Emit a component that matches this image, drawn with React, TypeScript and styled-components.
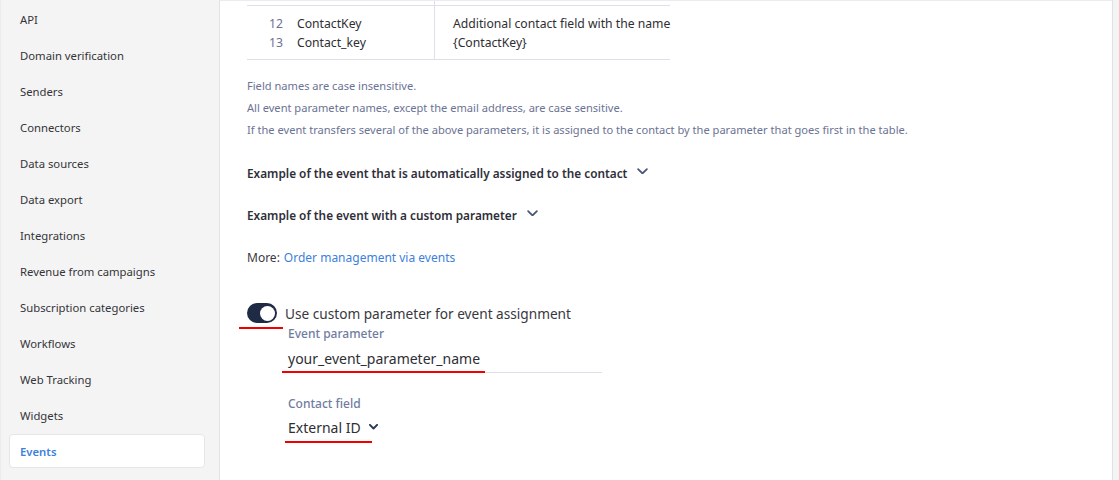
import React from 'react'
import styled, { createGlobalStyle } from 'styled-components'

const GlobalStyle = createGlobalStyle`
  html, body {
    margin: 0;
    padding: 0;
    height: 480px;
    overflow: hidden;
    background: #ffffff;
    font-family: 'Noto Sans', 'Open Sans', Arial, sans-serif;
    color: #2e2e33;
  }
  #root {
    height: 100%;
  }
`

const Page = styled.div`
  display: flex;
  height: 480px;
`

const Sidebar = styled.nav`
  width: 220px;
  flex-shrink: 0;
  background: #f4f4f4;
  border-right: 1px solid #e3e3e6;
  border-left: 1px solid #ececee;
  box-sizing: border-box;
  padding-top: 1px;
  display: flex;
  flex-direction: column;
`

const NavItem = styled.div<{ active?: boolean }>`
  box-sizing: border-box;
  flex-shrink: 0;
  height: ${(p) => (p.active ? '34px' : '36px')};
  margin: ${(p) => (p.active ? '1px 14px 1px 8px' : '0 14px 0 8px')};
  padding-left: 10px;
  display: flex;
  align-items: center;
  font-size: 11.3px;
  font-weight: ${(p) => (p.active ? 600 : 400)};
  color: ${(p) => (p.active ? '#3d7fdc' : '#34343a')};
  background: ${(p) => (p.active ? '#ffffff' : 'transparent')};
  border: 1px solid ${(p) => (p.active ? '#e6e6ea' : 'transparent')};
  border-radius: 4px;
`

const Main = styled.main`
  flex: 1;
  border-top: 1px solid #ececee;
  border-right: 1px solid #dfe1ea;
  padding: 0 0 0 27px;
  display: flex;
  flex-direction: column;
  overflow: hidden;
`

const Gutter = styled.div`
  width: 6px;
  background: #f4f4f4;
`

const Table = styled.div`
  width: 423px;
  display: grid;
  grid-template-columns: 188px 1fr;
  margin-top: -1px;
`

const Cell = styled.div<{ first?: boolean; stub?: boolean }>`
  border-bottom: 1px solid #dde0ea;
  border-right: ${(p) => (p.first ? '1px solid #dde0ea' : 'none')};
  height: ${(p) => (p.stub ? '5px' : 'auto')};
  padding: ${(p) => (p.stub ? '0' : p.first ? '8px 0 7px 14px' : '8px 0 7px 18px')};
  font-size: 12.2px;
  line-height: 19px;
  white-space: nowrap;
  color: #2e2e33;
`

const KeyLine = styled.div`
  display: flex;
  gap: 14px;
`

const Num = styled.span`
  width: 22px;
  text-align: right;
  color: #6b7394;
`

const Notes = styled.div`
  margin-top: 15px;
  display: flex;
  flex-direction: column;
`

const Note = styled.div`
  font-size: 11.1px;
  line-height: 22px;
  color: #6b7394;
`

const Accordion = styled.div`
  margin-top: 21px;
  display: flex;
  align-items: center;
  gap: 10px;
  height: 22px;
  font-size: 11.8px;
  font-weight: 600;
  color: #2e2e38;
  & + & {
    margin-top: 20px;
  }
  & svg {
    margin-top: -4px;
  }
`

const More = styled.div`
  margin-top: 20px;
  height: 22px;
  display: flex;
  align-items: center;
  font-size: 12px;
  color: #3a3a40;
`

const Link = styled.a`
  margin-left: 4px;
  color: #3d7fdc;
  text-decoration: none;
`

const ToggleRow = styled.div`
  margin-top: 35px;
  display: flex;
  align-items: center;
  gap: 8px;
  position: relative;
`

const Switch = styled.div`
  width: 30px;
  height: 20px;
  border-radius: 10px;
  background: #1f2a44;
  display: flex;
  align-items: center;
  justify-content: flex-end;
  padding: 0 2px;
  box-sizing: border-box;
`

const Knob = styled.div`
  width: 15px;
  height: 15px;
  border-radius: 50%;
  background: #ffffff;
`

const ToggleLabel = styled.span`
  font-size: 13.65px;
  color: #38383e;
`

const Mark = styled.div<{ w: number; left: number; top: number }>`
  position: absolute;
  left: ${(p) => p.left}px;
  top: ${(p) => p.top}px;
  width: ${(p) => p.w}px;
  height: 2px;
  background: #f00000;
`

const Fields = styled.div`
  margin-left: 35px;
  margin-top: 2px;
  display: flex;
  flex-direction: column;
  width: 320px;
`

const FieldLabel = styled.div<{ gap?: number }>`
  margin-top: ${(p) => p.gap ?? 0}px;
  padding-left: 6px;
  font-size: 12px;
  line-height: 18px;
  font-weight: 500;
  color: #6f7ca0;
`

const Input = styled.div`
  margin-top: 2px;
  height: 27px;
  padding-left: 6px;
  border-bottom: 1px solid #dde0e6;
  display: flex;
  align-items: center;
  font-size: 14px;
  color: #2e2e33;
  position: relative;
`

const Select = styled.div`
  margin-top: 3px;
  height: 22px;
  padding-left: 6px;
  display: flex;
  align-items: center;
  gap: 8px;
  font-size: 14px;
  color: #2e2e33;
  position: relative;
`

const Chevron = ({ size = 11, color = '#4a5778', weight = 1.6 }) => (
  <svg width={size} height={size * 0.6} viewBox='0 0 10 6' fill='none'>
    <polyline
      points='1,1 5,5 9,1'
      stroke={color}
      strokeWidth={weight}
      strokeLinecap='round'
      strokeLinejoin='round'
    />
  </svg>
)

const navItems = [
  'API',
  'Domain verification',
  'Senders',
  'Connectors',
  'Data sources',
  'Data export',
  'Integrations',
  'Revenue from campaigns',
  'Subscription categories',
  'Workflows',
  'Web Tracking',
  'Widgets',
  'Events',
]

export default function App() {
  return (
    <>
      <GlobalStyle />
      <Page>
        <Sidebar>
          {navItems.map((item) => (
            <NavItem key={item} active={item === 'Events'}>
              {item}
            </NavItem>
          ))}
        </Sidebar>
        <Main>
          <Table>
            <Cell first stub />
            <Cell stub />
            <Cell first>
              <KeyLine>
                <Num>12</Num>
                <span>ContactKey</span>
              </KeyLine>
              <KeyLine>
                <Num>13</Num>
                <span>Contact_key</span>
              </KeyLine>
            </Cell>
            <Cell>
              Additional contact field with the name
              <br />
              {'{ContactKey}'}
            </Cell>
          </Table>
          <Notes>
            <Note>Field names are case insensitive.</Note>
            <Note>All event parameter names, except the email address, are case sensitive.</Note>
            <Note>
              If the event transfers several of the above parameters, it is assigned to the contact
              by the parameter that goes first in the table.
            </Note>
          </Notes>
          <Accordion>
            Example of the event that is automatically assigned to the contact
            <Chevron />
          </Accordion>
          <Accordion>
            Example of the event with a custom parameter
            <Chevron />
          </Accordion>
          <More>
            More:<Link href='#'>Order management via events</Link>
          </More>
          <ToggleRow>
            <Switch>
              <Knob />
            </Switch>
            <ToggleLabel>Use custom parameter for event assignment</ToggleLabel>
            <Mark w={44} left={-8} top={24} />
          </ToggleRow>
          <Fields>
            <FieldLabel>Event parameter</FieldLabel>
            <Input>
              your_event_parameter_name
              <Mark w={203} left={0} top={26} />
            </Input>
            <FieldLabel gap={22}>Contact field</FieldLabel>
            <Select>
              External ID
              <Chevron size={9} color='#2e3a5c' weight={2.2} />
              <Mark w={87} left={3} top={25} />
            </Select>
          </Fields>
        </Main>
        <Gutter />
      </Page>
    </>
  )
}
